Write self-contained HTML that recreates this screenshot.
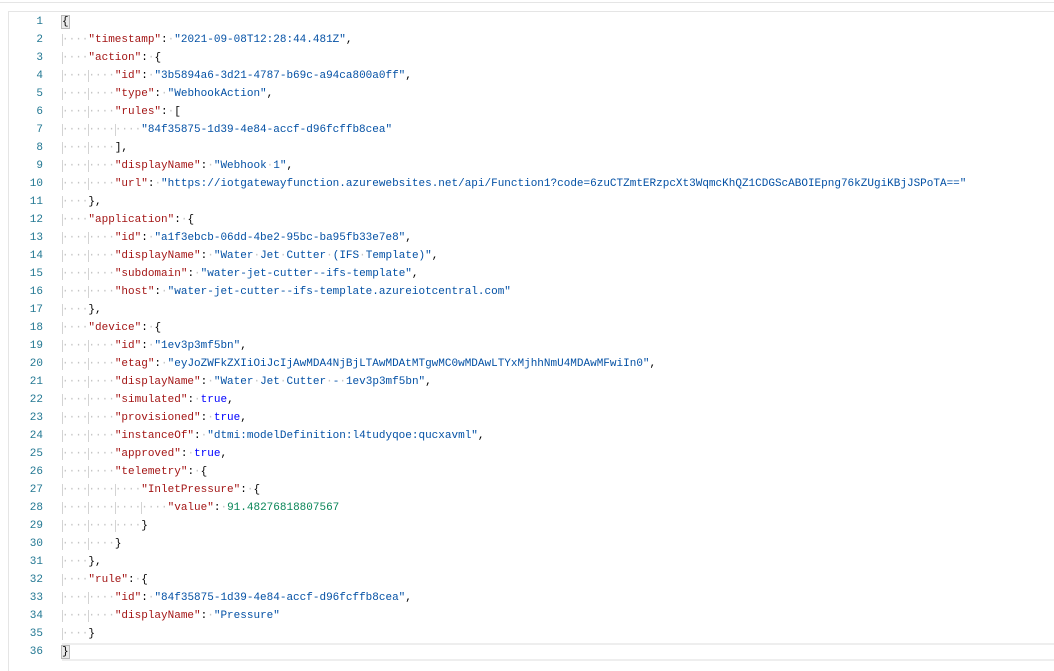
<!DOCTYPE html>
<html><head><meta charset="utf-8"><style>
html,body{margin:0;padding:0;background:#fff;width:1054px;height:670px;overflow:hidden}
.top{position:absolute;left:0;top:2px;width:1054px;height:1px;background:#e5e5e5}
.ed{position:absolute;left:8px;top:11px;width:1046px;height:659px;border-top:1px solid #e5e5e5;border-left:1px solid #e5e5e5}
.ln{position:absolute;left:0;top:1px;width:34px;font:11px/18px "Liberation Mono",monospace;color:#237893;text-align:right}
.code{position:absolute;left:53px;top:1px;font:11px/18px "Liberation Mono",monospace;color:#000}
.l{height:18px;position:relative;white-space:pre}
.w{color:#c4c4c4}
.g{box-shadow:inset 1px 0 #d3d3d3}
.k{color:#a31515}.s{color:#0451a5}.n{color:#098658}.b{color:#0000ff}
.m{outline:1px solid #b9b9b9;background:#eaeaea}
.cur{position:absolute;left:53px;top:631px;width:993px;height:14px;border-top:2px solid #eeeeee;border-bottom:2px solid #eeeeee}
</style></head><body>
<div class="top"></div>
<div class="ed">
<div class="cur"></div>
<div class="ln">1<br>2<br>3<br>4<br>5<br>6<br>7<br>8<br>9<br>10<br>11<br>12<br>13<br>14<br>15<br>16<br>17<br>18<br>19<br>20<br>21<br>22<br>23<br>24<br>25<br>26<br>27<br>28<br>29<br>30<br>31<br>32<br>33<br>34<br>35<br>36</div>
<div class="code">
<div class="l"><span class="m">{</span></div>
<div class="l"><span class="w g">····</span><span class="k">"timestamp"</span>:<span class="w">·</span><span class="s">"2021-09-08T12:28:44.481Z"</span>,</div>
<div class="l"><span class="w g">····</span><span class="k">"action"</span>:<span class="w">·</span>{</div>
<div class="l"><span class="w g">····</span><span class="w g">····</span><span class="k">"id"</span>:<span class="w">·</span><span class="s">"3b5894a6-3d21-4787-b69c-a94ca800a0ff"</span>,</div>
<div class="l"><span class="w g">····</span><span class="w g">····</span><span class="k">"type"</span>:<span class="w">·</span><span class="s">"WebhookAction"</span>,</div>
<div class="l"><span class="w g">····</span><span class="w g">····</span><span class="k">"rules"</span>:<span class="w">·</span>[</div>
<div class="l"><span class="w g">····</span><span class="w g">····</span><span class="w g">····</span><span class="s">"84f35875-1d39-4e84-accf-d96fcffb8cea"</span></div>
<div class="l"><span class="w g">····</span><span class="w g">····</span>],</div>
<div class="l"><span class="w g">····</span><span class="w g">····</span><span class="k">"displayName"</span>:<span class="w">·</span><span class="s">"Webhook<span class="w">·</span>1"</span>,</div>
<div class="l"><span class="w g">····</span><span class="w g">····</span><span class="k">"url"</span>:<span class="w">·</span><span class="s">"https://iotgatewayfunction.azurewebsites.net/api/Function1?code=6zuCTZmtERzpcXt3WqmcKhQZ1CDGScABOIEpng76kZUgiKBjJSPoTA=="</span></div>
<div class="l"><span class="w g">····</span>},</div>
<div class="l"><span class="w g">····</span><span class="k">"application"</span>:<span class="w">·</span>{</div>
<div class="l"><span class="w g">····</span><span class="w g">····</span><span class="k">"id"</span>:<span class="w">·</span><span class="s">"a1f3ebcb-06dd-4be2-95bc-ba95fb33e7e8"</span>,</div>
<div class="l"><span class="w g">····</span><span class="w g">····</span><span class="k">"displayName"</span>:<span class="w">·</span><span class="s">"Water<span class="w">·</span>Jet<span class="w">·</span>Cutter<span class="w">·</span>(IFS<span class="w">·</span>Template)"</span>,</div>
<div class="l"><span class="w g">····</span><span class="w g">····</span><span class="k">"subdomain"</span>:<span class="w">·</span><span class="s">"water-jet-cutter--ifs-template"</span>,</div>
<div class="l"><span class="w g">····</span><span class="w g">····</span><span class="k">"host"</span>:<span class="w">·</span><span class="s">"water-jet-cutter--ifs-template.azureiotcentral.com"</span></div>
<div class="l"><span class="w g">····</span>},</div>
<div class="l"><span class="w g">····</span><span class="k">"device"</span>:<span class="w">·</span>{</div>
<div class="l"><span class="w g">····</span><span class="w g">····</span><span class="k">"id"</span>:<span class="w">·</span><span class="s">"1ev3p3mf5bn"</span>,</div>
<div class="l"><span class="w g">····</span><span class="w g">····</span><span class="k">"etag"</span>:<span class="w">·</span><span class="s">"eyJoZWFkZXIiOiJcIjAwMDA4NjBjLTAwMDAtMTgwMC0wMDAwLTYxMjhhNmU4MDAwMFwiIn0"</span>,</div>
<div class="l"><span class="w g">····</span><span class="w g">····</span><span class="k">"displayName"</span>:<span class="w">·</span><span class="s">"Water<span class="w">·</span>Jet<span class="w">·</span>Cutter<span class="w">·</span>-<span class="w">·</span>1ev3p3mf5bn"</span>,</div>
<div class="l"><span class="w g">····</span><span class="w g">····</span><span class="k">"simulated"</span>:<span class="w">·</span><span class="b">true</span>,</div>
<div class="l"><span class="w g">····</span><span class="w g">····</span><span class="k">"provisioned"</span>:<span class="w">·</span><span class="b">true</span>,</div>
<div class="l"><span class="w g">····</span><span class="w g">····</span><span class="k">"instanceOf"</span>:<span class="w">·</span><span class="s">"dtmi:modelDefinition:l4tudyqoe:qucxavml"</span>,</div>
<div class="l"><span class="w g">····</span><span class="w g">····</span><span class="k">"approved"</span>:<span class="w">·</span><span class="b">true</span>,</div>
<div class="l"><span class="w g">····</span><span class="w g">····</span><span class="k">"telemetry"</span>:<span class="w">·</span>{</div>
<div class="l"><span class="w g">····</span><span class="w g">····</span><span class="w g">····</span><span class="k">"InletPressure"</span>:<span class="w">·</span>{</div>
<div class="l"><span class="w g">····</span><span class="w g">····</span><span class="w g">····</span><span class="w g">····</span><span class="k">"value"</span>:<span class="w">·</span><span class="n">91.48276818807567</span></div>
<div class="l"><span class="w g">····</span><span class="w g">····</span><span class="w g">····</span>}</div>
<div class="l"><span class="w g">····</span><span class="w g">····</span>}</div>
<div class="l"><span class="w g">····</span>},</div>
<div class="l"><span class="w g">····</span><span class="k">"rule"</span>:<span class="w">·</span>{</div>
<div class="l"><span class="w g">····</span><span class="w g">····</span><span class="k">"id"</span>:<span class="w">·</span><span class="s">"84f35875-1d39-4e84-accf-d96fcffb8cea"</span>,</div>
<div class="l"><span class="w g">····</span><span class="w g">····</span><span class="k">"displayName"</span>:<span class="w">·</span><span class="s">"Pressure"</span></div>
<div class="l"><span class="w g">····</span>}</div>
<div class="l"><span class="m">}</span></div>
</div>
</div>
</body></html>
